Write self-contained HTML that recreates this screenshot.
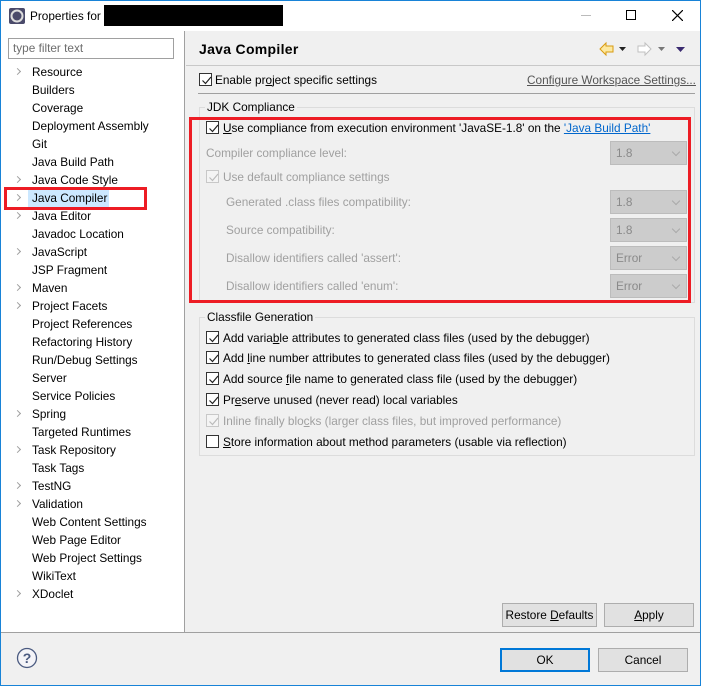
<!DOCTYPE html>
<html><head><meta charset="utf-8"><style>
*{margin:0;padding:0;box-sizing:border-box}
body{width:701px;height:686px;overflow:hidden;background:#f0f0f0;font-family:"Liberation Sans",sans-serif;font-size:11.8px;color:#000;position:relative}
.a{position:absolute;white-space:nowrap}
.t{position:absolute;white-space:nowrap;line-height:16px;transform:translateY(-8px)}
.g{color:#a0a0a0}
.cb{position:absolute;width:13px;height:13px;border:1px solid #333;background:#fff}
.cb.d{border-color:#c8c8c8;background:#f4f4f4}
.cb svg{position:absolute;left:1px;top:1px}
.combo{position:absolute;left:610px;width:77px;height:24px;background:#ccc;border:1px solid #bcbcbc;color:#8a8a8a;padding-left:5px;line-height:22px}
.combo:after{content:"";position:absolute;right:7px;top:7px;width:5px;height:5px;border-right:1px solid #aaa;border-bottom:1px solid #aaa;transform:rotate(45deg)}
.btn{position:absolute;height:24px;background:#e1e1e1;border:1px solid #adadad;text-align:center;line-height:22px}
.arr{position:absolute;left:15px;width:5px;height:5px;border-right:1.5px solid #a0a0a0;border-top:1.5px solid #a0a0a0;transform:rotate(45deg)}
.grp{position:absolute;border:1px solid #dcdcdc}
u{text-decoration:underline}
</style></head><body>
<div class="a" style="left:0;top:0;width:701px;height:686px;border:1px solid #1883d7;z-index:10;pointer-events:none"></div>
<div class="a" style="left:0;top:0;width:701px;height:31px;background:#fff"></div>
<svg class="a" style="left:9px;top:8px" width="16" height="16"><rect x="0" y="0" width="16" height="16" rx="2" fill="#4a4a6a"/><circle cx="8" cy="8" r="5.5" fill="none" stroke="#ddd" stroke-width="2"/><circle cx="8" cy="8" r="2.5" fill="#4a4a6a"/></svg>
<div class="t" style="left:30px;top:16px">Properties for</div>
<div class="a" style="left:104px;top:5px;width:179px;height:21px;background:#000"></div>
<div class="a" style="left:581px;top:15px;width:10px;height:1px;background:#bbb"></div>
<div class="a" style="left:626px;top:10px;width:10px;height:10px;border:1px solid #000"></div>
<svg class="a" style="left:672px;top:10px" width="11" height="11"><path d="M0 0L11 11M11 0L0 11" stroke="#000" stroke-width="1.2"/></svg>

<div class="a" style="left:1px;top:31px;width:184px;height:601px;background:#fff;border-right:1px solid #a0a0a0"></div>
<div class="a" style="left:8px;top:38px;width:166px;height:21px;border:1px solid #a0a0a0;background:#fff;color:#6d6d6d;padding-left:4px;line-height:19px">type filter text</div>
<div class="a" style="left:28px;top:189px;width:81px;height:18px;background:#cce8ff"></div>
<div class="a" style="left:4px;top:187px;width:143px;height:23px;border:3px solid #ed1c24"></div>
<div id="tree"></div>

<div class="t" style="left:199px;top:49px;font-size:14px;font-weight:bold;letter-spacing:0.3px">Java Compiler</div>
<svg class="a" style="left:598px;top:40px" width="92" height="18"><path d="M2 9L8 3V6H15V12H8V15Z" fill="#fde9a0" stroke="#d89a10"/><path d="M21 7H28L24.5 11Z" fill="#222"/><path d="M53 9L47 3V6H40V12H47V15Z" fill="#fff" stroke="#c0c0c0"/><path d="M60 7H67L63.5 11Z" fill="#777"/><path d="M78 7H87L82.5 12Z" fill="#3a2a70"/></svg>
<div class="a" style="left:186px;top:65px;width:514px;height:1px;background:#c8c8c8"></div>

<div class="cb" style="left:199px;top:73px"><svg width="11" height="11"><path d="M1.5 5.5L4.5 8.5L10 2" fill="none" stroke="#222" stroke-width="1.2"/></svg></div>
<div class="t" style="left:215px;top:80px">Enable pr<u>o</u>ject specific settings</div>
<div class="t" style="left:527px;top:80px;color:#555"><u>Configure Workspace Settings...</u></div>
<div class="a" style="left:198px;top:93px;width:497px;height:1px;background:#a0a0a0"></div>

<div class="grp" style="left:199px;top:107px;width:496px;height:196px"></div>
<div class="t" style="left:205px;top:107px;background:#f0f0f0;padding:0 2px">JDK Compliance</div>
<div class="cb" style="left:206px;top:121px"><svg width="11" height="11"><path d="M1.5 5.5L4.5 8.5L10 2" fill="none" stroke="#222" stroke-width="1.2"/></svg></div>
<div class="t" style="left:223px;top:128px"><u>U</u>se compliance from execution environment 'JavaSE-1.8' on the <u style="color:#0066cc">'Java Build Path'</u></div>
<div class="t g" style="left:206px;top:153px">Compiler compliance level:</div>
<div class="combo" style="top:141px">1.8</div>
<div class="cb d" style="left:206px;top:170px"><svg width="11" height="11"><path d="M1.5 5.5L4.5 8.5L10 2" fill="none" stroke="#bbb" stroke-width="1.2"/></svg></div>
<div class="t g" style="left:223px;top:177px">Use default compliance settings</div>
<div class="t g" style="left:226px;top:202px">Generated .class files compatibility:</div>
<div class="combo" style="top:190px">1.8</div>
<div class="t g" style="left:226px;top:230px">Source compatibility:</div>
<div class="combo" style="top:218px">1.8</div>
<div class="t g" style="left:226px;top:258px">Disallow identifiers called 'assert':</div>
<div class="combo" style="top:246px">Error</div>
<div class="t g" style="left:226px;top:286px">Disallow identifiers called 'enum':</div>
<div class="combo" style="top:274px">Error</div>
<div class="a" style="left:189px;top:117px;width:502px;height:186px;border:3px solid #ed1c24"></div>

<div class="grp" style="left:199px;top:317px;width:496px;height:139px"></div>
<div class="t" style="left:205px;top:317px;background:#f0f0f0;padding:0 2px">Classfile Generation</div>
<div id="cf"></div>

<div class="btn" style="left:502px;top:603px;width:95px">Restore <u>D</u>efaults</div>
<div class="btn" style="left:604px;top:603px;width:90px"><u>A</u>pply</div>
<div class="a" style="left:1px;top:632px;width:699px;height:1px;background:#a0a0a0"></div>
<svg class="a" style="left:16px;top:647px" width="22" height="22"><circle cx="11" cy="11" r="9.5" fill="#f4f4f8" stroke="#4a5a80" stroke-width="1.3"/><text x="11" y="16" text-anchor="middle" font-family="Liberation Sans" font-weight="bold" font-size="14" fill="#4a5a80">?</text></svg>
<div class="btn" style="left:500px;top:648px;width:90px;border:2px solid #0078d7;line-height:20px">OK</div>
<div class="btn" style="left:598px;top:648px;width:90px">Cancel</div>

<script>
var items=[["Resource",1],["Builders"],["Coverage"],["Deployment Assembly"],["Git"],["Java Build Path"],["Java Code Style",1],["Java Compiler",1],["Java Editor",1],["Javadoc Location"],["JavaScript",1],["JSP Fragment"],["Maven",1],["Project Facets",1],["Project References"],["Refactoring History"],["Run/Debug Settings"],["Server"],["Service Policies"],["Spring",1],["Targeted Runtimes"],["Task Repository",1],["Task Tags"],["TestNG",1],["Validation",1],["Web Content Settings"],["Web Page Editor"],["Web Project Settings"],["WikiText"],["XDoclet",1]];
var h="";items.forEach(function(it,i){var y=72+i*18;h+='<div class="t" style="left:32px;top:'+y+'px">'+it[0]+'</div>';if(it[1])h+='<div class="arr" style="top:'+(y-3)+'px"></div>';});
document.getElementById("tree").innerHTML=h;
var cf=[["Add varia<u>b</u>le attributes to generated class files (used by the debugger)",1],["Add <u>l</u>ine number attributes to generated class files (used by the debugger)",1],["Add source <u>f</u>ile name to generated class file (used by the debugger)",1],["Pr<u>e</u>serve unused (never read) local variables",1],["Inline finally blo<u>c</u>ks (larger class files, but improved performance)",2],["<u>S</u>tore information about method parameters (usable via reflection)",0]];
var ys=[338,358,379,400,421,442];h="";
cf.forEach(function(c,i){var y=ys[i];var d=c[1]==2;h+='<div class="cb'+(d?' d':'')+'" style="left:206px;top:'+(y-7)+'px">'+(c[1]?'<svg width="11" height="11"><path d="M1.5 5.5L4.5 8.5L10 2" fill="none" stroke="'+(d?'#bbb':'#222')+'" stroke-width="1.2"/></svg>':'')+'</div><div class="t'+(d?' g':'')+'" style="left:223px;top:'+y+'px">'+c[0]+'</div>';});
document.getElementById("cf").innerHTML=h;
</script>
</body></html>
